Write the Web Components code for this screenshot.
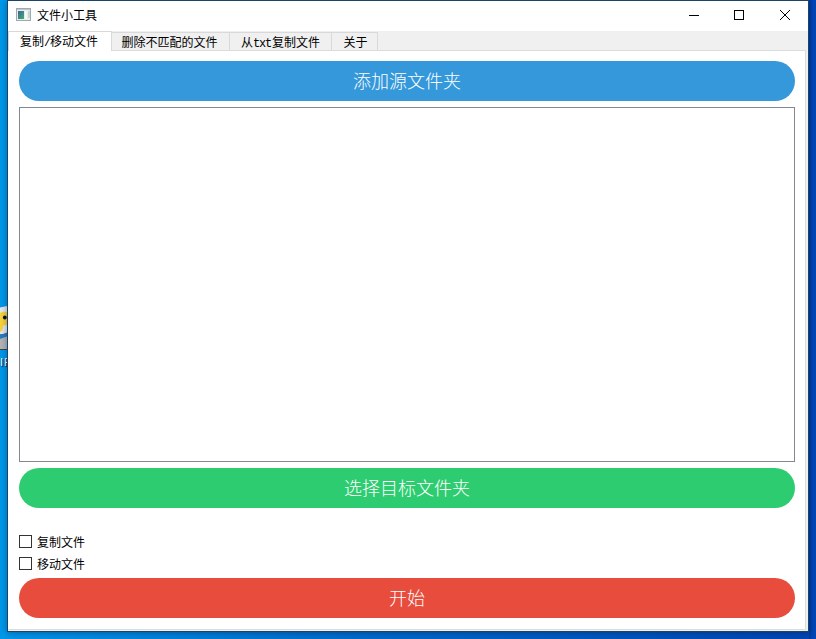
<!DOCTYPE html>
<html lang="zh-CN"><head><meta charset="utf-8"><title>文件小工具</title>
<style>
html,body{margin:0;height:100%;overflow:hidden}
body{font:12px/16px "Liberation Sans","Noto Sans CJK SC",sans-serif;color:#000}
</style></head><body>
<desk-top><app-window>
<title-bar>文件小工具</title-bar>
<tab-bar><tab-item selected style="--w:102px">复制<span style="display:inline-block;width:6px;text-indent:0;font:12px 'Liberation Mono',monospace">/</span>移动文件</tab-item><tab-item style="--w:117px;--shift:-1px">删除不匹配的文件</tab-item><tab-item style="--w:101px">从<span style="font:12px 'Liberation Mono',monospace;letter-spacing:-1.2px;margin-right:1px">txt</span>复制文件</tab-item><tab-item style="--w:45px;--shift:1px">关于</tab-item></tab-bar>
<tab-pane>
<pill-button style="--c:#3498db">添加源文件夹</pill-button>
<list-box></list-box>
<pill-button style="--c:#2ecc71">选择目标文件夹</pill-button>
<check-group><check-box>复制文件</check-box><check-box>移动文件</check-box></check-group>
<pill-button style="--c:#e74c3c">开始</pill-button>
</tab-pane>
</app-window></desk-top>
<script>
const define=(name,html)=>customElements.define(name,class extends HTMLElement{
  constructor(){super();this.attachShadow({mode:'open'}).innerHTML=html;}
});
define('desk-top',`<style>
:host{display:block;position:relative;box-sizing:border-box;width:816px;height:639px;padding:0 7px;overflow:hidden;background:linear-gradient(90deg,#0098ea,#006fce 40%,#0046b4 100%)}
.edge{position:absolute;top:0;right:0;width:7px;height:639px;background:linear-gradient(90deg,#003a9c,#0046b8 60%)}
.icon{position:absolute;left:0;top:304px;width:7px;height:70px}
.cap{position:absolute;left:0;top:355px;white-space:nowrap;color:#fff;font:11px/15px "Liberation Sans",sans-serif;letter-spacing:1px;text-shadow:1px 1px 1px #003}
</style><div class="edge"></div>
<svg class="icon" viewBox="0 0 7 70" preserveAspectRatio="none"><path d="M0 3.500L7 2V30H0Z" fill="#e6e8ea"/><path d="M0 9Q3 7 7 8V21L3 21.500Q3 27 0 28Z" fill="#f8d33c"/><circle cx="4.800" cy="13.500" r="1.900" fill="#111"/><path d="M0 31L7 28.500V32L0 34.500Z" fill="#3477b4"/><path d="M0 35L7 32.500V45H0Z" fill="#b5b5b5"/><path d="M0 45.500H7" stroke="#444"/></svg>
<div class="cap">IF</div><slot></slot>`);
define('app-window',`<style>:host{display:flex;flex-direction:column;position:relative;box-sizing:border-box;width:802px;height:632px;border:1px solid #1b4568;background:#f0f0f0;box-shadow:0 1px 7px rgba(0,20,60,.4)}</style><slot></slot>`);
define('title-bar',`<style>
:host{display:flex;align-items:center;height:30px;flex:none;background:#fff;padding-left:8px;box-sizing:border-box}
.name{flex:1;margin-left:6px}
.btns{display:flex;height:30px}.btns svg{width:46px;height:30px}.btns svg:first-child{width:45px}
</style><svg width="15" height="13" viewBox="0 0 15 13" style="margin-bottom:3px"><defs><linearGradient id="g" x2="1" y2="1"><stop stop-color="#3f64a0"/><stop offset="1" stop-color="#3fae66"/></linearGradient></defs><rect x=".5" y=".5" width="14" height="12" fill="#e8ecef" stroke="#a0a9af"/><path d="M1 1.500H14" stroke="#bcc7ce"/><rect x="2" y="3" width="6" height="8" fill="url(#g)"/><rect x="9" y="3" width="2" height="8" fill="#f4f8fa"/><rect x="12" y="3" width="2" height="7" fill="#c0dccb"/></svg>
<div class="name"><slot></slot></div>
<div class="btns">
<svg viewBox="0 0 45 30"><path d="M18 14.500H28" stroke="#000" shape-rendering="crispEdges"/></svg>
<svg viewBox="0 0 46 30"><rect x="18.500" y="9.500" width="9" height="9" fill="none" stroke="#000"/></svg>
<svg viewBox="0 0 46 30"><path d="M18 9L28 19M28 9L18 19" stroke="#000" stroke-width="1"/></svg>
</div>`);
define('tab-bar',`<style>:host{display:flex;align-items:flex-end;height:19px;flex:none}</style><slot></slot>`);
define('tab-item',`<style>
:host{display:block;position:relative;box-sizing:content-box;width:var(--w);height:17px;border:1px solid #d9d9d9;border-left:0;border-bottom:0;text-align:center;line-height:20px;white-space:nowrap;font-size:12px}
:host([selected]){background:#fff;height:19px;margin-bottom:-1px;border-left:1px solid #d9d9d9;z-index:1;text-align:left;text-indent:11px}
span{position:relative;left:var(--shift,0)}
</style><span><slot></slot></span>`);
define('tab-pane',`<style>:host{display:flex;flex-direction:column;box-sizing:border-box;width:798px;height:580px;border:1px solid #dcdcdc;border-left-color:#fff;background:#fff;padding:10px 10px 0;}</style><slot></slot>`);
define('pill-button',`<style>:host{display:flex;align-items:center;justify-content:center;box-sizing:border-box;height:40px;padding-bottom:2px;flex:none;border-radius:20px;background:var(--c);color:#fff;font:300 18px/24px "Noto Sans CJK SC",sans-serif}</style><slot></slot>`);
define('list-box',`<style>:host{display:block;box-sizing:border-box;height:355px;margin:6px 0;border:1px solid #828790;background:#fff;flex:none}</style>`);
define('check-group',`<style>:host{display:flex;flex-direction:column;gap:6px;height:45px;padding:25px 0 0;flex:none}</style><slot></slot>`);
define('check-box',`<style>:host{display:flex;align-items:center;height:16px;gap:5px}i{width:13px;height:13px;box-sizing:border-box;border:1px solid #333;background:#fff}span{padding-top:4px}</style><i></i><span><slot></slot></span>`);
</script></body></html>
